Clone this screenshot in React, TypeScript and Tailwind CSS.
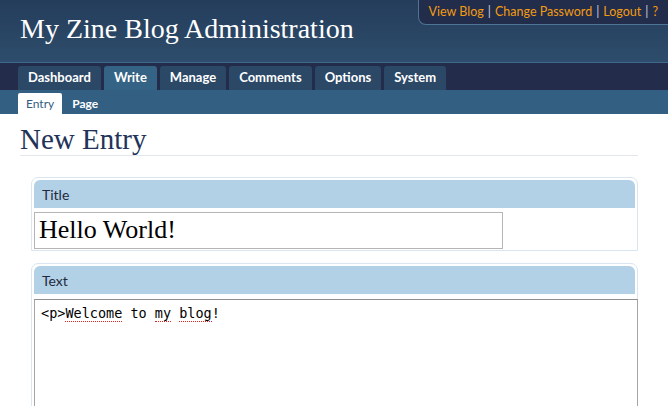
import React from "react";

const sans = { fontFamily: "Lato, 'DejaVu Sans', sans-serif" };
const serif = { fontFamily: "'Liberation Serif', 'DejaVu Serif', serif" };

const tabs = ["Dashboard", "Write", "Manage", "Comments", "Options", "System"];

function Section({ label, children }: { label: string; children: React.ReactNode }) {
  return (
    <div className="ml-[11px] rounded-t-[7px] border border-[#d9e6f1] p-[2px] pb-[1px]">
      <div className="flex h-[28px] items-center rounded-t-[6px] bg-[#b3d1e6] pl-[8px] text-[14px] text-[#1f2a3c]" style={sans}>
        {label}
      </div>
      <div className="pt-[4px]">{children}</div>
    </div>
  );
}

// spellchecker squiggle
const misspelled = "border-b border-dotted border-[#e02020]";

export default function App() {
  return (
    <div className="min-h-screen w-[668px] overflow-hidden bg-white">
      {/* header */}
      <div className="relative h-[62px] bg-gradient-to-b from-[#243d5b] to-[#2e4d6c]">
        <h1 className="pl-[20px] pt-[13px] text-[28px] leading-[32px] text-white" style={serif}>
          My Zine Blog Administration
        </h1>
        <div
          className="absolute right-0 top-0 flex h-[25px] items-center rounded-bl-[8px] border-b border-l border-[#4d7595] bg-[#222c4b] pl-[10px] pr-[10px] text-[12.5px] text-[#f39c12]"
          style={sans}
        >
          <span>View Blog</span>
          <span className="px-[4px] text-[#c9cfd8]">|</span>
          <span>Change Password</span>
          <span className="px-[4px] text-[#c9cfd8]">|</span>
          <span>Logout</span>
          <span className="px-[4px] text-[#c9cfd8]">|</span>
          <span>?</span>
        </div>
      </div>
      <div className="h-px bg-[#3f6a8c]" />

      {/* main nav */}
      <div className="flex h-[27px] items-end gap-[3px] bg-[#232c4a] pl-[18px]">
        {tabs.map((t) => (
          <div
            key={t}
            className={`flex h-[24px] items-center rounded-t-[3px] px-[10px] text-[13px] font-bold text-white ${
              t === "Write" ? "bg-[#356385]" : "bg-[#2b4867]"
            }`}
            style={sans}
          >
            {t}
          </div>
        ))}
      </div>

      {/* sub nav */}
      <div className="flex h-[24px] items-end bg-[#336082] pl-[18px] text-[12px]" style={sans}>
        <div className="flex h-[21px] items-center rounded-t-[2px] bg-white px-[8px] text-[#336082]">Entry</div>
        <div className="flex h-[21px] items-center px-[10px] font-bold text-white">Page</div>
      </div>

      {/* content */}
      <div className="pl-[20px] pr-[30px]">
        <h2 className="border-b border-[#e3e7ec] pb-[1px] pt-[11px] text-[29px] leading-[29px] text-[#22335a]" style={serif}>
          New Entry
        </h2>
        <div className="mt-[21px]">
          <Section label="Title">
            <div className="h-[37px] w-[469px] border border-[#b5b5b5] pl-[4px] text-[26px] leading-[34px] text-black" style={serif}>
              Hello World!
            </div>
          </Section>
        </div>
        <div className="mt-[12px]">
          <Section label="Text">
            <div
              className="-mr-[3px] mt-[1px] h-[140px] border border-[#a5a5a5] border-t-[#8f8f8f] px-[6px] pt-[4px] text-[13.5px] leading-[18px] text-black"
              style={{ fontFamily: "'DejaVu Sans Mono', 'Liberation Mono', monospace" }}
            >
              &lt;p&gt;<span className={misspelled}>Welcome</span> to <span className={misspelled}>my</span>{" "}
              <span className={misspelled}>blog</span>!
            </div>
          </Section>
        </div>
      </div>
    </div>
  );
}
